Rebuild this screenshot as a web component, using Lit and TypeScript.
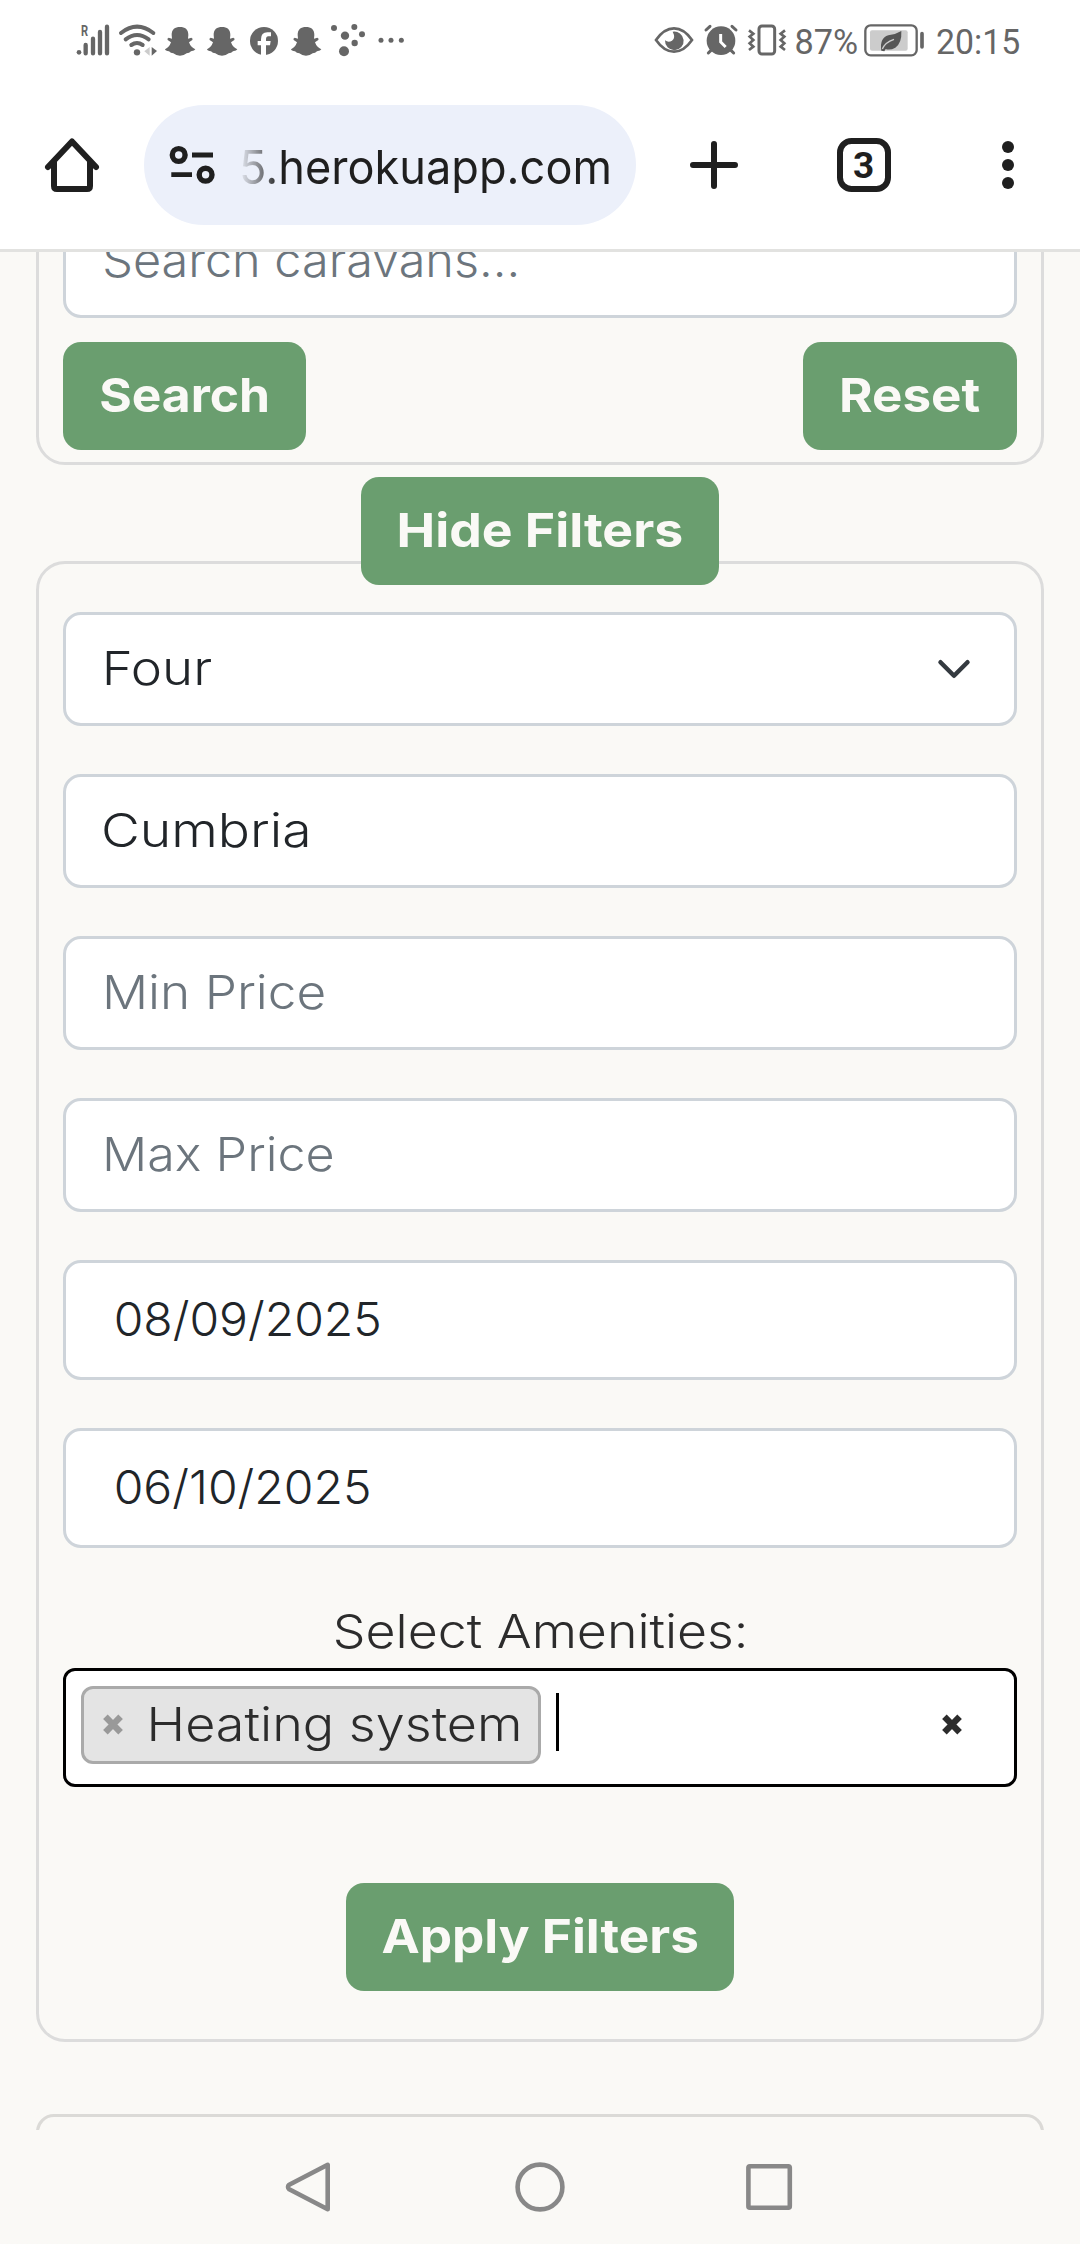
import { LitElement, html, svg, css } from "lit";
import { customElement, state } from "lit/decorators.js";

interface Face {
  family: string;
  weight: number;
  size: number;
}

const LIGHT: Face = { family: "Inter", weight: 300, size: 47 };
const BOLD: Face = { family: "Inter", weight: 700, size: 47 };
const URL_FACE: Face = { family: "Inter", weight: 400, size: 47 };
const STATUS: Face = { family: "Roboto", weight: 400, size: 35 };

const canvas = document.createElement("canvas").getContext("2d")!;

/* One line of text whose glyphs are stretched to `ink` pixels, starting
   `lead` pixels into a box that is `box` pixels wide. */
function line(text: string, face: Face, box: number, lead: number, ink: number, cls = "") {
  canvas.font = `${face.weight} ${face.size}px ${face.family}, sans-serif`;
  const m = canvas.measureText(text);
  const k = ink / (m.actualBoundingBoxRight + m.actualBoundingBoxLeft);
  const x = lead + m.actualBoundingBoxLeft * k;
  return html`<svg class="line ${cls}" width=${box} height="60" viewBox="0 0 ${box} 60">
    <text
      transform="translate(${x} 46) scale(${k} 1)"
      font-family="${face.family}, sans-serif"
      font-weight=${face.weight}
      font-size=${face.size}
      fill="currentColor"
    >${text}</text>
  </svg>`;
}

/* Status icons are drawn on a grid of three units per pixel. */
const cell = (x0: number, x1: number, body: unknown) =>
  html`<svg class="cell" width=${(x1 - x0) / 3} height="40" viewBox="${x0} 30 ${x1 - x0} 120">${body}</svg>`;

const ghost = svg`<path fill="currentColor" d="M335 75C335 58 345 51 360 51S385 58 385 75L384 86L394 83Q400 86 397 90L387 97Q392 112 406 118Q404 123 393 124Q388 130 380 130Q372 137 360 137Q348 137 340 130Q332 130 327 124Q316 123 315 118Q328 112 333 97L323 90Q320 86 326 83L336 86Z"/>`;

const cross = html`<svg class="cross" width="20" height="21" viewBox="0 0 20 21">
  <path d="M2.4 2.8L17.6 18.2M17.6 2.8L2.4 18.2" stroke="currentColor" stroke-width="6.4" fill="none" />
</svg>`;

interface Field {
  text: string;
  box: number;
  lead: number;
  ink: number;
  kind: string;
}

@customElement("app-root")
export class AppRoot extends LitElement {
  static styles = css`
    :host {
      display: flex;
      flex-direction: column;
      width: 1080px;
      height: 2244px;
      overflow: hidden;
      background: #faf9f6;
      color: #212529;
    }
    svg {
      display: block;
      flex: none;
      overflow: visible;
    }
    .status {
      display: flex;
      flex: none;
      justify-content: space-between;
      height: 70px;
      padding: 20px 60px 0 74px;
      box-sizing: border-box;
      background: #fff;
      color: #666;
    }
    .group {
      display: flex;
      height: 40px;
    }
    .status .line {
      margin-top: -12px;
    }
    .toolbar {
      display: flex;
      flex: none;
      height: 182px;
      box-sizing: border-box;
      padding: 35px 42px 0 42px;
      border-bottom: 3px solid #e2e2e0;
      background: #fff;
      color: #1f1f1f;
    }
    .toolbar > svg {
      margin-top: 30px;
    }
    .address {
      display: flex;
      flex: none;
      align-items: center;
      width: 492px;
      height: 120px;
      margin: 0 48px 0 42px;
      padding-left: 24px;
      gap: 24px;
      box-sizing: border-box;
      border-radius: 60px;
      background: #ecf0fa;
    }
    .tabs {
      margin: 0 84px 0 90px;
    }
    .url {
      margin-top: 6px;
      -webkit-mask-image: linear-gradient(90deg, rgba(0, 0, 0, 0.08), #000 38px);
      mask-image: linear-gradient(90deg, rgba(0, 0, 0, 0.08), #000 38px);
    }
    .page {
      display: flex;
      flex: none;
      flex-direction: column;
      height: 1878px;
      padding: 0 36px;
      box-sizing: border-box;
      overflow: hidden;
    }
    .card {
      display: flex;
      flex: none;
      flex-direction: column;
      box-sizing: border-box;
      border: 3px solid #dcdcdc;
      border-radius: 29px;
      padding: 48px 24px;
      gap: 48px;
    }
    .search {
      margin-top: -72px;
      padding: 21px 24px 12px;
      gap: 24px;
    }
    .results {
      margin-top: 72px;
      height: 200px;
      border-color: #dbdad7;
      border-radius: 18px;
    }
    .row {
      display: flex;
      justify-content: space-between;
    }
    .center {
      display: flex;
      justify-content: center;
    }
    .toggle {
      position: relative;
      z-index: 1;
      margin: 12px 0 -24px;
    }
    .btn {
      height: 108px;
      padding: 0 36px;
      border: 0;
      border-radius: 18px;
      background: #6a9e6f;
      color: #faf9f6;
    }
    .field {
      display: flex;
      align-items: center;
      justify-content: space-between;
      height: 114px;
      box-sizing: border-box;
      padding: 0 36px;
      border: 3px solid #ced4da;
      border-radius: 18px;
      background: #fff;
    }
    .choice {
      padding-right: 42px;
    }
    .hint {
      color: #6c757d;
    }
    .date {
      height: 120px;
      padding-left: 48px;
    }
    .amenities {
      display: flex;
      flex-direction: column;
      margin-bottom: 48px;
      color: #2c2c2c;
    }
    .caption {
      display: flex;
      justify-content: center;
      height: 72px;
      padding-top: 6px;
      box-sizing: border-box;
    }
    .picker {
      display: flex;
      align-items: center;
      height: 119px;
      box-sizing: border-box;
      padding: 0 52px 5px 15px;
      border: 3px solid #000;
      border-radius: 12px;
      background: #fff;
    }
    .tag {
      display: flex;
      align-items: center;
      width: 460px;
      height: 78px;
      box-sizing: border-box;
      padding-left: 19px;
      gap: 26px;
      border: 3px solid #aaa;
      border-radius: 12px;
      background: #e4e4e4;
    }
    .tag .cross {
      color: #999;
    }
    .tag .line {
      margin-top: -1px;
    }
    .picker .cross {
      margin-top: -1px;
    }
    .caret {
      width: 3px;
      height: 58px;
      margin: 0 auto 6px 15px;
      background: #000;
    }
    .nav {
      display: flex;
      flex: none;
      justify-content: center;
      align-items: center;
      gap: 180px;
      height: 114px;
      color: #888;
    }
  `;

  @state() private fields: Field[] = [
    { text: "Four", box: 114, lead: 4.3, ink: 104.8, kind: "choice" },
    { text: "Cumbria", box: 210, lead: 2.3, ink: 203, kind: "" },
    { text: "Min Price", box: 226, lead: 4.3, ink: 217.5, kind: "hint" },
    { text: "Max Price", box: 234, lead: 4.3, ink: 226, kind: "hint" },
    { text: "08/09/2025", box: 268, lead: 2.7, ink: 262.3, kind: "date" },
    { text: "06/10/2025", box: 258, lead: 2.7, ink: 252, kind: "date" },
  ];

  private statusBar() {
    return html`<header class="status">
      <div class="group">
        ${cell(42, 168, svg`
          <circle cx="57" cy="127" r="7" fill="currentColor"/>
          <path d="M77 105V130M99 86V130M120 66V130M141 50V130" stroke="currentColor" stroke-width="13" stroke-linecap="round"/>
          <text x="0" y="0" transform="translate(63 78) scale(.72 1)" font-family="Roboto, sans-serif" font-weight="700" font-size="46" fill="currentColor">R</text>`)}
        ${cell(168, 300, svg`
          <g fill="none" stroke="currentColor" stroke-width="12" stroke-linecap="round">
            <path d="M183 69Q231 31 280 69"/><path d="M197 88Q231 62 266 88"/><path d="M214 105Q231 93 248 105"/>
          </g>
          <circle cx="231" cy="127" r="9.5" fill="currentColor"/>
          <path d="M253 124L269 111V137Z" fill="#ccc"/><path d="M275 111L291 123L275 137Z" fill="currentColor"/>`)}
        ${cell(300, 426, ghost)}
        ${cell(300, 426, ghost)}
        ${cell(552, 678, svg`
          <circle cx="612" cy="93" r="42" fill="currentColor"/>
          <path fill="#fff" d="M603 136V106H593V93H603V88Q603 67 622 67H633V79H625Q618 79 618 88V93H632L630 106H618V136Z"/>`)}
        ${cell(300, 426, ghost)}
        ${cell(804, 940, svg`<g fill="currentColor">
          <circle cx="822" cy="54" r="9"/><circle cx="883" cy="51" r="9"/><circle cx="855" cy="77" r="12.5"/>
          <circle cx="906" cy="73" r="9"/><circle cx="884" cy="99" r="9.5"/><circle cx="852" cy="124" r="15"/></g>`)}
        ${cell(940, 1050, svg`<g fill="currentColor">
          <circle cx="964" cy="91" r="7.5"/><circle cx="994" cy="91" r="7.5"/><circle cx="1025" cy="91" r="7.5"/></g>`)}
      </div>
      <div class="group">
        ${cell(30, 180, svg`
          <path d="M48 90Q72 55 102 55T156 90Q132 125 102 125T48 90Z" fill="none" stroke="currentColor" stroke-width="8"/>
          <path d="M98 65Q108 84 96 92Q85 99 75 91A28 28 0 1 0 98 65Z" fill="currentColor"/>`)}
        ${cell(180, 310, svg`
          <circle cx="243" cy="92" r="43" fill="currentColor"/>
          <path d="M198 60L210 49M276 49L288 60M205 129L213 121M273 121L281 129" stroke="currentColor" stroke-width="9" stroke-linecap="round"/>
          <path d="M242 72V96L257 111" fill="none" stroke="#fff" stroke-width="9"/>`)}
        ${cell(310, 462, svg`<g fill="none" stroke="currentColor">
          <rect x="358" y="48" width="47" height="84" rx="9" stroke-width="9"/>
          <path d="M328 61L341 71L330 80L341 90L330 100L341 110L328 120M436 61L423 71L434 80L423 90L434 100L423 110L436 120" stroke-width="8"/></g>`)}
        ${line("87%", STATUS, 68, 1.5, 62)}
        ${cell(666, 876, svg`
          <rect x="676" y="46" width="154" height="90" rx="16" fill="none" stroke="currentColor" stroke-width="7"/>
          <rect x="690" y="61" width="113" height="61" rx="6" fill="#ccc"/>
          <path d="M784 63Q786 99 766 113Q750 122 737 117L733 124L724 122Q718 84 745 76Q768 73 784 63Z" fill="#555"/>
          <path d="M727 117Q735 97 762 88" fill="none" stroke="#ccc" stroke-width="4"/>
          <path d="M846 71V111" stroke="currentColor" stroke-width="11" stroke-linecap="round"/>`)}
        ${line("20:15", STATUS, 88, 5, 82.5)}
      </div>
    </header>`;
  }

  private toolbar() {
    return html`<nav class="toolbar">
      <svg width="60" height="60" viewBox="42 135 60 60" fill="none" stroke="currentColor" stroke-width="6">
        <path d="M48 167L72 141.5L96 167" stroke-linecap="round" stroke-linejoin="round" />
        <path d="M54 161V186Q54 189 57 189H87Q90 189 90 186V161" />
      </svg>
      <div class="address">
        <svg width="50" height="60" viewBox="168 135 50 60" fill="none" stroke="currentColor" stroke-width="5.4">
          <circle cx="178.7" cy="155" r="6.4" /><circle cx="205.6" cy="174.7" r="6.4" />
          <path d="M192 155H213M171.3 174.7H192" stroke-width="4.8" />
        </svg>
        ${line("5.herokuapp.com", URL_FACE, 370, 0, 367, "url")}
      </div>
      <svg width="60" height="60" viewBox="684 135 60 60" stroke="currentColor" stroke-width="6" stroke-linecap="round">
        <path d="M693 165H735M714 144V186" />
      </svg>
      <svg class="tabs" width="60" height="60" viewBox="834 135 60 60">
        <rect x="840" y="141" width="48" height="48" rx="11.5" fill="none" stroke="currentColor" stroke-width="6" />
        <text x="863.7" y="178.3" text-anchor="middle" font-family="Roboto, sans-serif" font-weight="700" font-size="37" fill="currentColor">3</text>
      </svg>
      <svg width="60" height="60" viewBox="978 135 60 60" fill="currentColor">
        <circle cx="1008" cy="147" r="6" /><circle cx="1008" cy="165" r="6" /><circle cx="1008" cy="183" r="6" />
      </svg>
    </nav>`;
  }

  private field(f: Field) {
    return html`<div class="field ${f.kind}">
      ${line(f.text, LIGHT, f.box, f.lead, f.ink)}
      ${f.kind === "choice"
        ? html`<svg width="36" height="36" viewBox="0 0 16 16" fill="none" stroke="#343a40" stroke-width="2" stroke-linecap="round" stroke-linejoin="round">
            <path d="m2 5 6 6 6-6" />
          </svg>`
        : ""}
    </div>`;
  }

  render() {
    return html`
      ${this.statusBar()} ${this.toolbar()}
      <main class="page">
        <section class="card search">
          <div class="field hint">${line("Search caravans...", LIGHT, 420, 2.3, 412.5)}</div>
          <div class="row">
            <button class="btn">${line("Search", BOLD, 171, 1.2, 167.4)}</button>
            <button class="btn">${line("Reset", BOLD, 142, 3.3, 137.7)}</button>
          </div>
        </section>
        <div class="center toggle">
          <button class="btn">${line("Hide Filters", BOLD, 286, 2.8, 282)}</button>
        </div>
        <section class="card">
          ${this.fields.map((f) => this.field(f))}
          <div class="amenities">
            <div class="caption">${line("Select Amenities:", LIGHT, 416, 3, 410)}</div>
            <div class="picker">
              <div class="tag">${cross} ${line("Heating system", LIGHT, 374, 2, 368.2)}</div>
              <div class="caret"></div>
              ${cross}
            </div>
          </div>
          <div class="center">
            <button class="btn">${line("Apply Filters", BOLD, 316, 0.5, 315)}</button>
          </div>
        </section>
        <section class="card results"></section>
      </main>
      <footer class="nav">
        <svg width="50" height="50" viewBox="0 0 50 50" fill="none" stroke="currentColor" stroke-width="4.6" stroke-linejoin="round">
          <path d="M42.7 2.8V47.2L4.2 27.2Q1.8 25 4.2 22.8Z" />
        </svg>
        <svg width="50" height="50" viewBox="0 0 50 50" fill="none" stroke="currentColor" stroke-width="4.6">
          <circle cx="25" cy="25" r="22.4" />
        </svg>
        <svg width="50" height="50" viewBox="0 0 50 50" fill="none" stroke="currentColor" stroke-width="4.6">
          <rect x="3.4" y="4.3" width="41.4" height="41.4" rx="1.5" />
        </svg>
      </footer>
    `;
  }
}
